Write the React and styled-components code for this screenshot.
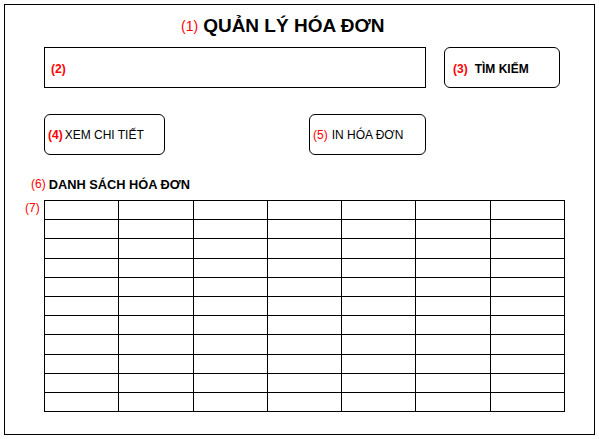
import React from "react";
import styled, { createGlobalStyle } from "styled-components";

const GlobalStyle = createGlobalStyle`
  html, body {
    margin: 0;
    padding: 0;
    background: #ffffff;
    font-family: "Liberation Sans", Arial, sans-serif;
  }
  * {
    box-sizing: border-box;
  }
`;

const COLS = 7;
const ROWS = 11;

const App = () => {
  const rows = Array.from({ length: ROWS });
  const cols = Array.from({ length: COLS });

  return (
    <>
      <GlobalStyle />
      <Frame>
        <TitleRow>
          <Mark size="14px">(1)</Mark>
          <Title>QUẢN LÝ HÓA ĐƠN</Title>
        </TitleRow>

        <SearchRow>
          <SearchBox>
            <Mark bold>(2)</Mark>
          </SearchBox>
          <SearchButton>
            <Mark bold>(3)</Mark>
            <BoldText>TÌM KIẾM</BoldText>
          </SearchButton>
        </SearchRow>

        <ActionRow>
          <ActionButton width="121px" gap="2px">
            <Mark bold>(4)</Mark>
            <span>XEM CHI TIẾT</span>
          </ActionButton>
          <ActionButton width="117px" gap="4px">
            <Mark>(5)</Mark>
            <span>IN HÓA ĐƠN</span>
          </ActionButton>
        </ActionRow>

        <ListLabel>
          <Mark>(6)</Mark>
          <BoldText size="12.8px">DANH SÁCH HÓA ĐƠN</BoldText>
        </ListLabel>

        <TableRow>
          <TableMark>(7)</TableMark>
          <Grid>
            <tbody>
              {rows.map((_, r) => (
                <tr key={r}>
                  {cols.map((_, c) => (
                    <td key={c} />
                  ))}
                </tr>
              ))}
            </tbody>
          </Grid>
        </TableRow>
      </Frame>
    </>
  );
};

const Frame = styled.div`
  margin: 4px;
  width: 591px;
  height: 431px;
  border: 1px solid #000;
  background: #fff;
  display: flex;
  flex-direction: column;
`;

const Mark = styled.span`
  color: #ff0000;
  font-size: ${(p) => p.size || "12px"};
  font-weight: ${(p) => (p.bold ? "bold" : "normal")};
`;

const TitleRow = styled.div`
  height: 42px;
  display: flex;
  align-items: center;
  gap: 5px;
  padding-left: 176px;
`;

const Title = styled.h1`
  margin: 0;
  font-size: 19px;
  font-weight: bold;
  color: #000;
`;

const SearchRow = styled.div`
  display: flex;
  gap: 18px;
  padding-left: 39px;
`;

const SearchBox = styled.div`
  width: 382px;
  height: 41px;
  border: 1px solid #000;
  display: flex;
  align-items: center;
  padding-left: 6px;
  padding-top: 2px;
`;

const SearchButton = styled.div`
  width: 116px;
  height: 41px;
  border: 1px solid #000;
  border-radius: 6px;
  display: flex;
  align-items: center;
  gap: 7px;
  padding-left: 8px;
  padding-top: 2px;
  font-size: 12px;
`;

const BoldText = styled.span`
  font-size: ${(p) => p.size || "12px"};
  font-weight: bold;
  color: #000;
`;

const ActionRow = styled.div`
  display: flex;
  gap: 144px;
  padding-left: 39px;
  margin-top: 26px;
`;

const ActionButton = styled.div`
  width: ${(p) => p.width};
  height: 41px;
  border: 1px solid #000;
  border-radius: 6px;
  display: flex;
  align-items: center;
  gap: ${(p) => p.gap};
  padding-left: 3px;
  padding-top: 1px;
  font-size: 12px;
  color: #000;
`;

const ListLabel = styled.div`
  display: flex;
  align-items: center;
  gap: 3px;
  height: 20px;
  margin-top: 19px;
  padding-left: 26px;
`;

const TableRow = styled.div`
  display: flex;
  align-items: flex-start;
  margin-top: 6px;
  padding-left: 20px;
`;

const TableMark = styled.span`
  width: 19px;
  margin-top: 1px;
  color: #ff0000;
  font-size: 12px;
`;

const Grid = styled.table`
  width: 521px;
  border-collapse: collapse;
  table-layout: fixed;
  border: 1px solid #000;

  td {
    border: 1px solid #000;
    padding: 0;
    height: 19.2px;
  }
`;

export default App;
